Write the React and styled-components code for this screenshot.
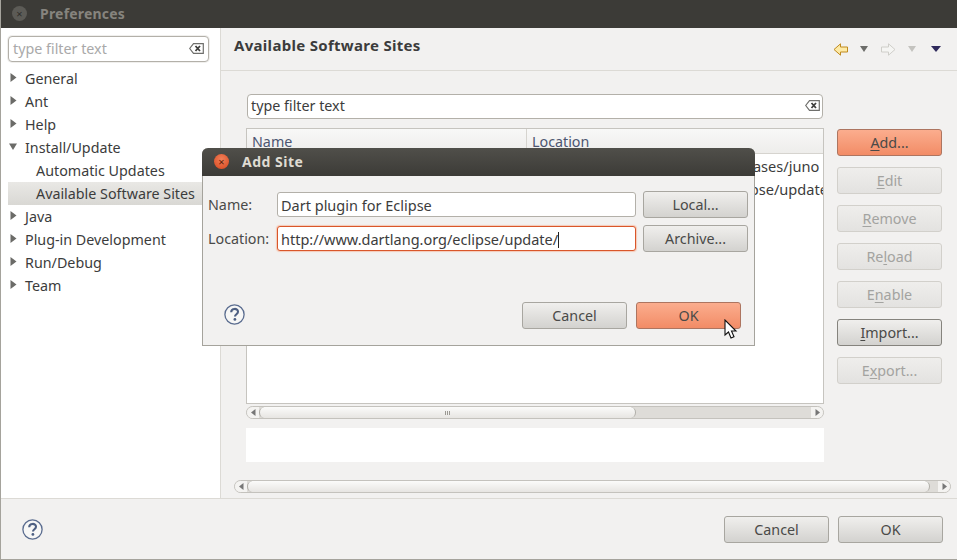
import styled, { createGlobalStyle } from "styled-components";

const GlobalStyle = createGlobalStyle`
  html, body {
    margin: 0;
    padding: 0;
    background: #f2f1f0;
  }
  * {
    box-sizing: border-box;
  }
`;

const Window = styled.div`
  position: relative;
  width: 957px;
  height: 560px;
  overflow: hidden;
  display: flex;
  flex-direction: column;
  background: #f2f1f0;
  color: #3c3c3c;
  font-family: "Noto Sans", "Open Sans", sans-serif;
  font-size: 14.3px;
  border-left: 1px solid #a5a39c;
  border-bottom: 1px solid #a5a39c;
`;

const TitleBar = styled.div`
  height: 28px;
  flex: none;
  margin-left: -1px;
  display: flex;
  align-items: center;
  padding: 0 0 1px 12px;
  gap: 13px;
  background: ${(p) => (p.$active ? "linear-gradient(#504f4a, #3c3b37)" : "#3c3b37")};
  border-radius: ${(p) => (p.$active ? "6px 6px 0 0" : "0")};
`;

const TitleText = styled.span`
  font-size: 14px;
  font-weight: 700;
  letter-spacing: ${(p) => (p.$active ? "0.5px" : "0.2px")};
  color: ${(p) => (p.$active ? "#dfdbd2" : "#86847e")};
`;

const CloseDot = styled.span`
  width: 15px;
  height: 15px;
  border-radius: 50%;
  display: flex;
  align-items: center;
  justify-content: center;
  font-size: 11px;
  line-height: 1;
  color: ${(p) => (p.$active ? "#5c1e08" : "#2f2e2b")};
  background: ${(p) => (p.$active ? "radial-gradient(circle at 50% 35%, #f0805a, #d8461c)" : "#5c5b56")};
`;

const Body = styled.div`
  height: 470px;
  flex: none;
  display: flex;
`;

const Sidebar = styled.div`
  width: 220px;
  flex: none;
  background: #fff;
  border-right: 1px solid #dcdad5;
  padding: 8px 0 0 7px;
`;

const SideFilter = styled.div`
  width: 201px;
  height: 26px;
  padding: 0 4px 2px;
  display: flex;
  align-items: center;
  justify-content: space-between;
  background: #fff;
  border: 1px solid #b3b0a9;
  border-radius: 4px;
  box-shadow: 0 0 0 1px #f0efed;
  color: #a9a9a9;
  margin-bottom: 5px;
`;

const TreeRow = styled.div`
  height: 23px;
  display: flex;
  align-items: center;
  gap: 7px;
  padding-left: ${(p) => (p.$child ? "28px" : "1px")};
  color: #3c3c3c;
  white-space: nowrap;
  background: ${(p) => (p.$selected ? "linear-gradient(#e9e8e5, #d9d8d4)" : "transparent")};
`;

const Main = styled.div`
  flex: 1;
  min-width: 0;
  display: flex;
  flex-direction: column;
`;

const MainHeader = styled.div`
  height: 43px;
  flex: none;
  display: flex;
  align-items: center;
  justify-content: space-between;
  padding: 0 16px 8px 13px;
  border-bottom: 1px solid #dcdad5;
  font-size: 15px;
  font-weight: 700;
  letter-spacing: 0.3px;
`;

const NavIcons = styled.div`
  margin-top: 8px;
  display: flex;
  align-items: center;
  gap: 12px;
`;

const NavSlot = styled.span`
  display: flex;
  margin-left: ${(p) => p.$shift || 0}px;
`;

const Content = styled.div`
  height: 409px;
  flex: none;
  padding: 23px 0 0 26px;
  display: flex;
  gap: 13px;
`;

const SitesColumn = styled.div`
  width: 577px;
  flex: none;
`;

const FilterField = styled.div`
  width: 576px;
  height: 25px;
  display: flex;
  align-items: center;
  justify-content: space-between;
  padding: 0 2px 2px 3px;
  background: #fff;
  border: 1px solid #b3b0a9;
  border-radius: 4px;
  margin-bottom: 9px;
`;

const Table = styled.div`
  width: 578px;
  height: 276px;
  margin-left: -1px;
  background: #fff;
  border: 1px solid #c6c4bf;
  overflow: hidden;
`;

const TableHead = styled.div`
  height: 25px;
  display: grid;
  grid-template-columns: 279px 1fr;
  background: linear-gradient(#f8f8f7, #eeedeb);
  border-bottom: 1px solid #d6d4cf;
`;

const HeadCell = styled.div`
  padding-left: 5px;
  line-height: 26px;
  color: #4c5570;
  & + & {
    border-left: 1px solid #d6d4cf;
  }
`;

const TableRow = styled.div`
  height: 23px;
  display: grid;
  grid-template-columns: 280px 1fr;
  line-height: 24px;
  font-size: 14.6px;
  white-space: nowrap;
`;

const Cell = styled.div`
  padding-left: 5px;
  overflow: hidden;
`;

const ScrollTrack = styled.div`
  height: 13px;
  flex: none;
  display: flex;
  align-items: stretch;
  border: 1px solid #c4c2bd;
  border-radius: 7px;
  background: #dedcd8;
  overflow: hidden;
  margin: ${(p) => p.$margin};
  width: ${(p) => p.$width}px;
`;

const ScrollEnd = styled.div`
  width: 12px;
  flex: none;
  display: flex;
  align-items: center;
  justify-content: center;
  background: #f4f3f1;
`;

const ScrollThumb = styled.div`
  width: ${(p) => p.$width}px;
  flex: none;
  display: flex;
  align-items: center;
  justify-content: center;
  gap: 1px;
  border: 1px solid #b0aea8;
  border-width: 0 1px;
  border-radius: 7px;
  background: linear-gradient(#fbfbfa, #e7e5e2);
`;

const ScrollRest = styled.span`
  flex: 1;
`;

const Grip = styled.i`
  width: 1px;
  height: 4px;
  background: #9b9993;
`;

const DetailBox = styled.div`
  width: 578px;
  height: 34px;
  margin-left: -1px;
  background: #fff;
`;

const SideButtons = styled.div`
  padding-top: 35px;
  display: flex;
  flex-direction: column;
  gap: 11px;
`;

const borderColor = (p) => {
  if (p.$hot) return "#ad7560";
  if (p.$disabled) return "#d2d0cb";
  return p.$strong ? "#85837d" : "#a8a6a0";
};

const Button = styled.div`
  width: 105px;
  height: 27px;
  flex: none;
  display: flex;
  align-items: center;
  justify-content: center;
  border: 1px solid ${borderColor};
  border-radius: 3px;
  color: ${(p) => (p.$disabled ? "#a3a3a0" : "#4a4a48")};
  background: ${(p) =>
    p.$hot
      ? "linear-gradient(#fbad8e, #f28c66)"
      : p.$disabled
        ? "linear-gradient(#efeeec, #e3e2e0)"
        : "linear-gradient(#f0efed, #d3d2cf)"};

  u {
    text-underline-offset: 2px;
  }
`;

const Footer = styled.div`
  flex: 1;
  display: flex;
  align-items: center;
  justify-content: space-between;
  padding: 1px 14px 0 21px;
  border-top: 1px solid #dcdad5;
`;

const ButtonRow = styled.div`
  display: flex;
  align-items: center;
  gap: 9px;
`;

/* the Add Site dialog floats over the preferences window */
const Dialog = styled.div`
  position: absolute;
  left: 201px;
  top: 148px;
  width: 553px;
  height: 198px;
  display: flex;
  flex-direction: column;
  background: #f2f1f0;
  border: 1px solid #a5a39c;
  border-top: 0;
  border-radius: 6px 6px 0 0;
`;

const DialogTitle = styled(TitleBar)`
  margin: 0 -1px;
  padding-left: 12px;
  padding-bottom: 2px;
`;

const DialogForm = styled.div`
  padding: 15px 6px 0 5px;
  display: flex;
  flex-direction: column;
  gap: 7px;
`;

const FormRow = styled.div`
  display: flex;
  align-items: center;
`;

const FieldLabel = styled.label`
  width: 69px;
  flex: none;
  color: #4a4a48;
`;

const TextField = styled.div`
  width: 359px;
  height: 25px;
  margin-right: 7px;
  padding-left: 3px;
  line-height: 24px;
  font-size: 14.5px;
  background: #fff;
  border: 1px solid ${(p) => (p.$focus ? "#d9562a" : "#b3b0a9")};
  border-radius: 3px;
  box-shadow: ${(p) => (p.$focus ? "0 0 1px 1px #f6c9b6" : "none")};
  color: #3c3c3c;
  white-space: nowrap;
`;

const Caret = styled.span`
  display: inline-block;
  width: 1px;
  height: 16px;
  vertical-align: -3px;
  background: #222;
`;

const DialogFooter = styled.div`
  margin-top: 50px;
  padding: 0 13px 0 21px;
  display: flex;
  align-items: center;
  justify-content: space-between;
`;

const DialogHelp = styled.span`
  display: flex;
  margin-bottom: 2px;
`;

const Pointer = styled.svg`
  position: absolute;
  left: 521px;
  top: 171px;
`;

const TriangleIcon = styled.svg`
  margin-bottom: 2px;
  flex: none;
`;

const Triangle = ({ open }) => (
  <TriangleIcon width="9" height="9" viewBox="0 0 9 9">
    <path d={open ? "M0 1.5h8L4 8z" : "M1.500 0l6 4.500-6 4.500z"} fill="#6b6b68" />
  </TriangleIcon>
);

const ClearIcon = () => (
  <svg width="15" height="11" viewBox="0 0 15 11">
    <path d="M4.500.7h9.800v9.600H4.500L.7 5.500z" fill="#fff" stroke="#6f6f6c" strokeWidth="1.200" />
    <path d="M6.500 3l4.500 5M11 3L6.500 8" stroke="#3f3f3d" strokeWidth="1.800" />
  </svg>
);

const HelpIcon = () => (
  <svg width="21" height="21" viewBox="0 0 21 21">
    <circle cx="10.500" cy="10.500" r="9.600" fill="#f7f7f6" stroke="#5a6c8f" strokeWidth="1.300" />
    <path
      d="M7.200 8.200c0-4.300 6.800-4.300 6.800-.4 0 2.400-3 2.500-3 4.700"
      fill="none"
      stroke="#4d5f82"
      strokeWidth="2.100"
    />
    <circle cx="10.900" cy="15.400" r="1.400" fill="#4d5f82" />
  </svg>
);

const NavArrow = ({ flip, fill, stroke }) => (
  <svg width="15" height="13" viewBox="0 0 15 13">
    <path
      d={flip ? "M.5 4h7V.8L14 6.500l-6.500 5.700V9h-7z" : "M14.500 4h-7V.8L1 6.500l6.500 5.700V9h7z"}
      fill={fill}
      stroke={stroke}
    />
  </svg>
);

const Menu = ({ color, wide }) => (
  <svg width={wide ? 10 : 8} height="6" viewBox="0 0 10 6" preserveAspectRatio="none">
    <path d="M0 0h10L5 6z" fill={color} />
  </svg>
);

const ArrowLeft = () => (
  <svg width="5" height="7" viewBox="0 0 5 7">
    <path d="M4.500 0v7L0 3.500z" fill="#777" />
  </svg>
);

const ArrowRight = () => (
  <svg width="5" height="7" viewBox="0 0 5 7">
    <path d="M.5 0v7L5 3.500z" fill="#777" />
  </svg>
);

const tree = [
  { label: "General" },
  { label: "Ant" },
  { label: "Help" },
  { label: "Install/Update", open: true },
  { label: "Automatic Updates", child: true },
  { label: "Available Software Sites", child: true, selected: true },
  { label: "Java" },
  { label: "Plug-in Development" },
  { label: "Run/Debug" },
  { label: "Team" },
];

const sites = [
  "http://download.eclipse.org/releases/juno",
  "http://download.eclipse.org/eclipse/updates/4.2",
];

const sideButtons = [
  { key: "Add", label: <><u>A</u>dd...</>, hot: true },
  { key: "Edit", label: <><u>E</u>dit</>, disabled: true },
  { key: "Remove", label: <><u>R</u>emove</>, disabled: true },
  { key: "Reload", label: <>Re<u>l</u>oad</>, disabled: true },
  { key: "Enable", label: <>E<u>n</u>able</>, disabled: true },
  { key: "Import", label: <><u>I</u>mport...</>, strong: true },
  { key: "Export", label: <>E<u>x</u>port...</>, disabled: true },
];

export default function App() {
  return (
    <>
      <GlobalStyle />
      <Window>
        <TitleBar>
          <CloseDot>×</CloseDot>
          <TitleText>Preferences</TitleText>
        </TitleBar>
        <Body>
          <Sidebar>
            <SideFilter>
              type filter text
              <ClearIcon />
            </SideFilter>
            {tree.map((item) => (
              <TreeRow key={item.label} $child={item.child} $selected={item.selected}>
                {!item.child && <Triangle open={item.open} />}
                {item.label}
              </TreeRow>
            ))}
          </Sidebar>
          <Main>
            <MainHeader>
              Available Software Sites
              <NavIcons>
                <NavArrow fill="#fdeaa6" stroke="#c08a1e" />
                <Menu color="#6d6d6a" />
                <NavSlot $shift={1}>
                  <NavArrow flip fill="#f5f5f3" stroke="#cfcec9" />
                </NavSlot>
                <Menu color="#c4c3bf" />
                <NavSlot $shift={3}>
                  <Menu color="#2f2a5c" wide />
                </NavSlot>
              </NavIcons>
            </MainHeader>
            <Content>
              <SitesColumn>
                <FilterField>
                  type filter text
                  <ClearIcon />
                </FilterField>
                <Table>
                  <TableHead>
                    <HeadCell>Name</HeadCell>
                    <HeadCell>Location</HeadCell>
                  </TableHead>
                  {sites.map((location) => (
                    <TableRow key={location}>
                      <Cell />
                      <Cell>{location}</Cell>
                    </TableRow>
                  ))}
                </Table>
                <ScrollTrack $width={578} $margin="2px 0 9px -1px">
                  <ScrollEnd>
                    <ArrowLeft />
                  </ScrollEnd>
                  <ScrollThumb $width={377}>
                    <Grip />
                    <Grip />
                    <Grip />
                  </ScrollThumb>
                  <ScrollRest />
                  <ScrollEnd>
                    <ArrowRight />
                  </ScrollEnd>
                </ScrollTrack>
                <DetailBox />
              </SitesColumn>
              <SideButtons>
                {sideButtons.map((b) => (
                  <Button key={b.key} $hot={b.hot} $disabled={b.disabled} $strong={b.strong}>
                    {b.label}
                  </Button>
                ))}
              </SideButtons>
            </Content>
            <ScrollTrack $width={717} $margin="0 0 0 13px">
              <ScrollEnd>
                <ArrowLeft />
              </ScrollEnd>
              <ScrollThumb $width={683} />
              <ScrollRest />
              <ScrollEnd>
                <ArrowRight />
              </ScrollEnd>
            </ScrollTrack>
          </Main>
        </Body>
        <Footer>
          <HelpIcon />
          <ButtonRow>
            <Button>Cancel</Button>
            <Button>OK</Button>
          </ButtonRow>
        </Footer>
        <Dialog>
          <DialogTitle $active>
            <CloseDot $active>×</CloseDot>
            <TitleText $active>Add Site</TitleText>
          </DialogTitle>
          <DialogForm>
            <FormRow>
              <FieldLabel>Name:</FieldLabel>
              <TextField>Dart plugin for Eclipse</TextField>
              <Button>Local...</Button>
            </FormRow>
            <FormRow>
              <FieldLabel>Location:</FieldLabel>
              <TextField $focus>
                http://www.dartlang.org/eclipse/update/
                <Caret />
              </TextField>
              <Button>Archive...</Button>
            </FormRow>
          </DialogForm>
          <DialogFooter>
            <DialogHelp>
              <HelpIcon />
            </DialogHelp>
            <ButtonRow>
              <Button>Cancel</Button>
              <Button $hot>OK</Button>
            </ButtonRow>
          </DialogFooter>
          <Pointer width="14" height="21" viewBox="0 0 14 21">
            <path d="M1 1v15l3.500-3 2.500 6 3-1.300-2.500-5.700H12z" fill="#fff" stroke="#111" strokeWidth="1.100" />
          </Pointer>
        </Dialog>
      </Window>
    </>
  );
}
